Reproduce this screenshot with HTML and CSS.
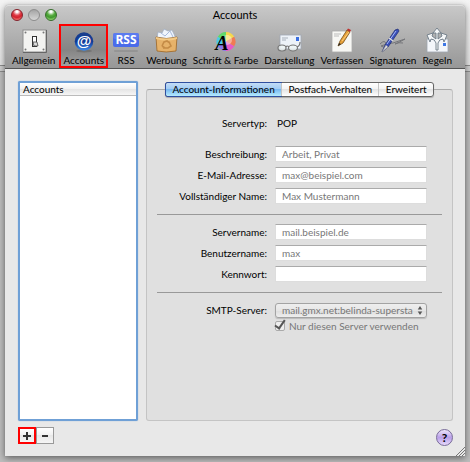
FILE: index.html
```html
<!DOCTYPE html>
<html lang="de">
<head>
<meta charset="utf-8">
<title>Accounts</title>
<link rel="stylesheet" href="styles.css">
</head>
<body>
<main class="window">
  <header class="chrome">
    <div class="titlebar">
      <div class="lights">
        <button class="light red" aria-label="Schließen"></button>
        <button class="light gray" aria-label="Minimieren"></button>
        <button class="light green" aria-label="Zoomen"></button>
      </div>
      <h1>Accounts</h1>
    </div>
    <nav class="toolbar">
      <button class="tool">
        <svg viewBox="0 0 28 26"><rect x="3" y="3" width="23" height="22" fill="#f3f3f1" stroke="#8d8d8d"/><path d="M3 25.500H26.500V3" fill="none" stroke="#666"/><g fill="#777"><circle cx="5.500" cy="5.500" r="1"/><circle cx="23.500" cy="5.500" r="1"/><circle cx="5.500" cy="22.500" r="1"/><circle cx="23.500" cy="22.500" r="1"/></g><rect x="12.500" y="9.500" width="4" height="10" fill="#fff" stroke="#333"/><path d="M13 15h4l1 4h-4z" fill="#ddd" stroke="#444" stroke-width=".8"/></svg>
        <span>Allgemein</span>
      </button>
      <button class="tool selected">
        <svg viewBox="0 0 28 26"><defs><linearGradient id="at" x1="0" y1="0" x2="0" y2="1"><stop offset="0" stop-color="#1b3f8c"/><stop offset=".5" stop-color="#103a97"/><stop offset="1" stop-color="#3f8be8"/></linearGradient></defs><ellipse cx="14" cy="24" rx="8" ry="1.500" fill="#555" opacity=".4"/><circle cx="14" cy="14.500" r="9.300" fill="url(#at)"/><text x="14" y="19" class="at">@</text></svg>
        <span>Accounts</span>
      </button>
      <button class="tool">
        <svg viewBox="0 0 28 26"><rect x="1" y="6" width="26" height="14" rx="2" fill="#4a6cea"/><rect x="1" y="6" width="26" height="6" rx="2" fill="#6c8af3" opacity=".5"/><text x="14" y="17" class="rss">RSS</text><rect x="2" y="23" width="24" height="2" rx="1" fill="#777" opacity=".35"/></svg>
        <span>RSS</span>
      </button>
      <button class="tool">
        <svg viewBox="0 0 28 26"><path d="M5 11L6 5l4 1 2-4 4 2 4-1 2 4 2 5z" fill="#f0f5fc" stroke="#9cabc2" stroke-width=".7"/><path d="M9 6l4 3 5-5 3 6" fill="none" stroke="#a9bbdc"/><path d="M4 10q10 3 21 0l-1 14q-10 2-19 0z" fill="#e6b26a" stroke="#9a6524" stroke-width=".8"/><path d="M4 10q10 3 21 0v2q-10 3-21 0z" fill="#f3ca86"/><path d="M10 19l2-4 3-1 3 2M17 15l2 4-3 2h-5M10 19l3 2" fill="none" stroke="#c48b46" stroke-width="1.600"/></svg>
        <span>Werbung</span>
      </button>
      <button class="tool">
        <svg viewBox="0 0 28 26"><path d="M14 14.500V5a9.500 9.500 0 0 1 8.200 4.700z" fill="#f5d84e"/><path d="M14 14.500l8.200-4.800a9.500 9.500 0 0 1 0 9.600z" fill="#f07b52"/><path d="M14 14.500l8.200 4.800A9.500 9.500 0 0 1 14 24z" fill="#e85ac5"/><path d="M14 14.500V24a9.500 9.500 0 0 1-8.200-4.700z" fill="#8a76ec"/><path d="M14 14.500l-8.200 4.800a9.500 9.500 0 0 1 0-9.600z" fill="#4bc9e9"/><path d="M14 14.500L5.800 9.700A9.500 9.500 0 0 1 14 5z" fill="#5fd86b"/><circle cx="15" cy="13" r="5" fill="#fff" opacity=".4"/><text x="10" y="23" class="glyph">A</text></svg>
        <span>Schrift &amp; Farbe</span>
      </button>
      <button class="tool">
        <svg viewBox="0 0 28 26"><rect x="5" y="8" width="21" height="14" fill="#edf2f8" stroke="#a1a9b5" stroke-width=".8"/><path d="M7 11h6M7 13h4" stroke="#a8b0bb"/><rect x="21" y="10" width="3" height="4" fill="#3a6ee0"/><g fill="#eef4f4" fill-opacity=".8" stroke="#777" stroke-width="1.200"><ellipse cx="7" cy="21" rx="4" ry="3"/><ellipse cx="18" cy="21" rx="4.500" ry="3"/><path d="M11 20q1-2 3 0M22 20q3-1 3-5" fill="none"/></g></svg>
        <span>Darstellung</span>
      </button>
      <button class="tool">
        <svg viewBox="0 0 28 26"><path d="M4 4h20v21H4z" fill="#f7f7f4" stroke="#aaa" stroke-width=".8"/><path d="M6 7h7M6 9h5" stroke="#bbb"/><path d="M10 19l2-5 7-11 3 2-7 11z" fill="#e9a238" stroke="#76501d" stroke-width=".8"/><path d="M19 3l1-1.500 3 1.500-1 2z" fill="#bf2f2c"/><path d="M10 19l1-3 2 1z" fill="#222"/><path d="M14 14l7-9" stroke="#ffd993" stroke-width=".8"/></svg>
        <span>Verfassen</span>
      </button>
      <button class="tool">
        <svg viewBox="0 0 28 26"><path d="M1 17q5-5 6 0t-5 2q7-3 12-3l12-4q-5 3-10 5 4-2 8-1" fill="none" stroke="#75767a" stroke-width="1"/><path d="M3 25l3-7L16 3l3-1 1 2L9 20z" fill="#394fb8" stroke="#202d73" stroke-width=".7"/><path d="M3 25l4-7 2 2z" fill="#ddd" stroke="#888" stroke-width=".5"/><path d="M8 17l9-13" stroke="#a7b9f4"/><path d="M10 11l4 3" stroke="#ddd" stroke-width="1.300"/></svg>
        <span>Signaturen</span>
      </button>
      <button class="tool">
        <svg viewBox="0 0 28 26"><rect x="4" y="12" width="21" height="13" fill="#f3f6fa" stroke="#9da5ae" stroke-width=".8"/><rect x="20" y="16" width="3" height="3" fill="#3c76e5"/><path d="M13 23V16Q12 12 8 12l-1 3-3-7 6-2-1 3 4 3V6h-3l4-5 4 5h-3v6l4-3-1-3 6 2-3 7-1-3q-4 0-5 4v7z" fill="#f5f7f8" stroke="#6d7b87" stroke-width=".9"/></svg>
        <span>Regeln</span>
      </button>
    </nav>
  </header>
  <div class="content">
    <section class="sidebar">
      <div class="list"><div class="list-head">Accounts</div></div>
      <div class="list-actions">
        <button class="add" aria-label="Hinzufügen"><svg viewBox="0 0 8 8"><path d="M4 0v8M0 4h8" stroke="#333" stroke-width="2"/></svg></button>
        <button aria-label="Entfernen"><svg viewBox="0 0 8 8"><path d="M1 4h6" stroke="#333" stroke-width="2"/></svg></button>
      </div>
    </section>
    <section class="detail">
      <div class="panel">
        <div class="tabs" role="tablist">
          <button role="tab" aria-selected="true" class="tab active">Account-Informationen</button>
          <button role="tab" aria-selected="false" class="tab">Postfach-Verhalten</button>
          <button role="tab" aria-selected="false" class="tab">Erweitert</button>
        </div>
        <form class="form">
          <div class="row type"><span class="label">Servertyp:</span><span>POP</span></div>
          <div class="group">
            <div class="row"><label for="desc">Beschreibung:</label><input id="desc" type="text" placeholder="Arbeit, Privat"></div>
            <div class="row"><label for="mail">E-Mail-Adresse:</label><input id="mail" type="text" placeholder="max@beispiel.com"></div>
            <div class="row"><label for="name">Vollständiger Name:</label><input id="name" type="text" placeholder="Max Mustermann"></div>
          </div>
          <hr>
          <div class="group">
            <div class="row"><label for="server">Servername:</label><input id="server" type="text" placeholder="mail.beispiel.de"></div>
            <div class="row"><label for="user">Benutzername:</label><input id="user" type="text" placeholder="max"></div>
            <div class="row"><label for="pass">Kennwort:</label><input id="pass" type="password"></div>
          </div>
          <hr>
          <div class="row"><label for="smtp">SMTP-Server:</label>
            <div class="select"><select id="smtp" disabled><option>mail.gmx.net:belinda-supersta</option></select><svg viewBox="0 0 6 10"><path d="M3 0l2.500 4h-5zM3 10l2.500-4h-5z" fill="#555"/></svg></div>
          </div>
          <div class="row"><span></span><label class="only"><input type="checkbox" checked disabled>Nur diesen Server verwenden</label></div>
        </form>
      </div>
      <button class="help" aria-label="Hilfe">?</button>
    </section>
  </div>
  <svg class="grip" viewBox="0 0 10 10"><path d="M1 10l9-9M4 10l6-6M7 10l3-3" stroke="#777"/></svg>
</main>
</body>
</html>
```
FILE: styles.css
```css
* { box-sizing: border-box; }
html { height: 100%; }
body {
  margin: 0;
  min-height: 100%;
  padding: 5px 5px 6px;
  display: flex;
  background: linear-gradient(#f4f4f4 0, #e4e4e4 65px, #8d8d8d 65px 66px, #cfcfcf 66px 71px, #8d8d8d 71px 72px, #bdbdbd 72px);
  font: 10px/14px Lato, sans-serif;
  color: #000;
}
button, input, select { font: inherit; color: inherit; margin: 0; padding: 0; border: 0; background: none; }

.window {
  position: relative;
  flex: 1;
  min-width: 0;
  display: flex;
  flex-direction: column;
  background: #e8e8e8;
  border-radius: 4px 4px 0 0;
  box-shadow: 0 0 1px #777, 0 2px 7px rgba(0, 0, 0, .5);
}
.chrome {
  border-radius: 4px 4px 0 0;
  border-top: 1px solid #dedede;
  border-bottom: 1px solid #555;
  background: linear-gradient(#c8c8c8, #979797);
}
.titlebar { display: grid; grid-template-columns: 60px 1fr 60px; align-items: center; height: 18px; padding: 0 6px; }
.lights { display: flex; gap: 5px; }
.light { width: 12px; height: 12px; border-radius: 50%; border: 1px solid #777; }
.red { background: radial-gradient(circle at 50% 15%, #fff 0 10%, #e0404a 40%, #d3202c 60%, #ffa08e); border-color: #84202a; }
.gray { background: linear-gradient(#a5a5a5, #d6d6d6); border-color: #8c8c8c; }
.green { background: radial-gradient(circle at 50% 15%, #fff 0 10%, #5cae45 40%, #3f992c 60%, #c2f59a); border-color: #356d2a; }
h1 { margin: 0; font-size: 11px; font-weight: 400; text-align: center; }

.toolbar { display: flex; justify-content: space-between; padding: 0 11px 0 5px; }
.tool { display: flex; flex-direction: column; align-items: center; height: 44px; padding: 2px 0 0; border: 2px solid transparent; white-space: nowrap; }
.tool svg { width: 28px; height: 26px; flex: none; margin-top: -1px; }
.tool span { line-height: 14px; }
.tool.selected { padding: 2px 2px 0; border-color: #f00; background: linear-gradient(#999, #858585 60%, #a0a0a0); }
.at { font: bold 15px "Liberation Sans", sans-serif; fill: #fff; text-anchor: middle; }
.rss { font: bold 12px "Open Sans", sans-serif; fill: #fff; text-anchor: middle; }
.glyph { font: italic bold 20px "Liberation Serif", serif; fill: #000; text-anchor: middle; }

.content { flex: 1; display: flex; gap: 8px; padding: 12px 12px 10px 13px; }
.sidebar { flex: 0 0 120px; display: flex; flex-direction: column; }
.list { flex: 1; border: 2px solid #6fa0d6; border-radius: 2px; background: #fff; box-shadow: 0 0 1px #6fa0d6; }
.list-head { height: 13px; padding: 0 3px; line-height: 12px; background: linear-gradient(#fff, #f0f0f0 50%, #e4e4e4 50%, #f6f6f6); border-bottom: 1px solid #bbb; }
.list-actions { display: flex; height: 25px; padding-top: 6px; }
.list-actions button { width: 18px; height: 17px; display: grid; place-items: center; background: linear-gradient(#fff, #f0f0f0 50%, #e8e8e8 50%, #f5f5f5); border: 1px solid #999; }
.list-actions .add { border: 2px solid #f00; }
.list-actions svg { width: 8px; height: 8px; }

.detail { flex: 1; min-width: 0; display: flex; flex-direction: column; padding-top: 8px; }
.panel { flex: 1; border: 1px solid #c4c4c4; border-top-color: #aaa; border-radius: 3px; background: #e0e0e0; }
.tabs { display: flex; height: 15px; margin: -8px 18px 0; border: 1px solid #666; border-radius: 3px; box-shadow: 0 1px 1px #aaa; background: linear-gradient(#fff, #f2f2f2 50%, #e3e3e3 50%, #fff); }
.tab { flex: 1 1 auto; line-height: 13px; white-space: nowrap; border-left: 1px solid #c4c4c4; }
.tab.active { border-left: 0; border-radius: 2px 0 0 2px; background: linear-gradient(#c3dcf6, #9dcaf4 50%, #78b8f0 50%, #b5ecff); box-shadow: 0 0 0 1px #2f4fa0; }

.form { padding: 18px 10px 0; }
.row { display: grid; grid-template-columns: 110px 1fr; column-gap: 8px; align-items: center; height: 16px; margin-right: 15px; }
.row > label:first-child, .label { text-align: right; white-space: nowrap; }
.type { margin-bottom: 15px; }
.type span:last-child { padding-left: 2px; }
.group { display: grid; row-gap: 5px; }
.row > input { width: 100%; height: 16px; padding: 0 6px; background: #fff; border: 1px solid #ddd; border-top-color: #aaa; }
.row > input::placeholder { color: #777; opacity: 1; }
hr { height: 1px; margin: 10px 0 9px; border: 0; background: #999; }
.select { position: relative; }
.select select { display: block; width: 100%; height: 15px; appearance: none; padding: 0 10px 0 6px; color: #777; opacity: 1; border: 1px solid #a3a3a3; border-radius: 3px; background: linear-gradient(#eee, #e6e6e6 50%, #dcdcdc 50%, #eee); box-shadow: 0 1px 1px #bbb; line-height: 12px; }
.select svg { position: absolute; right: 4px; top: 3px; width: 6px; height: 9px; }
.only { display: flex; align-items: center; gap: 4px; color: #777; white-space: nowrap; }
.only input { appearance: none; width: 10px; height: 10px; border: 1px solid #aaa; border-radius: 2px; background: #eee; display: grid; place-items: center; }
.only input::before { content: ""; width: 4px; height: 9px; margin-top: -5px; border: solid #555; border-width: 0 2px 2px 0; transform: rotate(35deg); }
.help { align-self: flex-end; width: 17px; height: 17px; margin-top: 8px; border: 1px solid #776a98; border-radius: 50%; font-weight: 700; font-size: 12px; line-height: 15px; background: linear-gradient(#eee6fb, #b99fe8 50%, #e6d9fb); }
.grip { position: absolute; right: 0; bottom: 0; width: 10px; height: 10px; }
```
